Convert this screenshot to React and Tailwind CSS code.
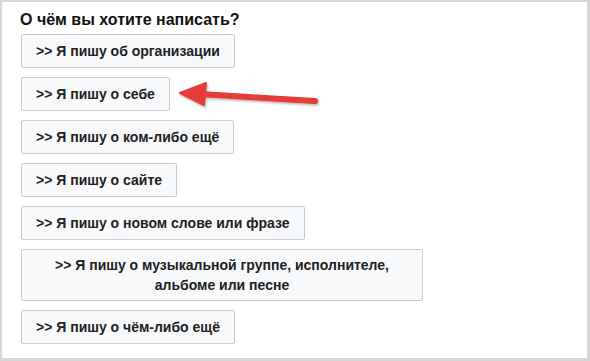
import React from "react";

const items = [
  { t: ">> Я пишу об организации" },
  { t: ">> Я пишу о себе" },
  { t: ">> Я пишу о ком-либо ещё" },
  { t: ">> Я пишу о сайте" },
  { t: ">> Я пишу о новом слове или фразе" },
  { t: ">> Я пишу о музыкальной группе, исполнителе, альбоме или песне", wide: true },
  { t: ">> Я пишу о чём-либо ещё" },
];

export default function App() {
  return (
    <div className="w-[590px] h-[361px] bg-white relative" style={{ fontFamily: '"Liberation Sans", Arial, sans-serif' }}>
      <div className="w-full h-full border-t-2 border-l-2 border-r-[3px] border-b-[3px] border-[#d6d6d6] pl-[18px] pt-[9px]">
        <h1 className="text-[16px] font-bold text-[#111] leading-[18px] mb-[5px]">О чём вы хотите написать?</h1>
        <div className="flex flex-col items-start gap-[9px]">
          {items.map((it, i) => (
            <div
              key={i}
              className={
                it.wide
                  ? "w-[402px] h-[52px] flex items-center justify-center text-center px-[14px] bg-[#f8f9fa] border border-[#c8ccd1] rounded-[2px] text-[14px] font-bold text-[#202122] leading-[20px] ml-px"
                  : "h-[34px] flex items-center px-[14px] bg-[#f8f9fa] border border-[#c8ccd1] rounded-[2px] text-[14px] font-bold text-[#202122] ml-px"
              }
            >
              {it.t}
            </div>
          ))}
        </div>
      </div>
      <svg className="absolute left-[176px] top-[80px]" width="150" height="30" viewBox="0 0 150 30">
        <defs>
          <filter id="sh" x="-10%" y="-30%" width="130%" height="180%">
            <feDropShadow dx="1" dy="1.5" stdDeviation="1.2" floodColor="#000" floodOpacity="0.3" />
          </filter>
        </defs>
        <g filter="url(#sh)">
          <line x1="24" y1="14" x2="139" y2="21" stroke="#e53b3b" strokeWidth="6" strokeLinecap="round" />
          <polygon points="4,13 30,3 28,25" fill="#e53b3b" strokeLinejoin="round" stroke="#e53b3b" strokeWidth="2" />
        </g>
      </svg>
    </div>
  );
}
